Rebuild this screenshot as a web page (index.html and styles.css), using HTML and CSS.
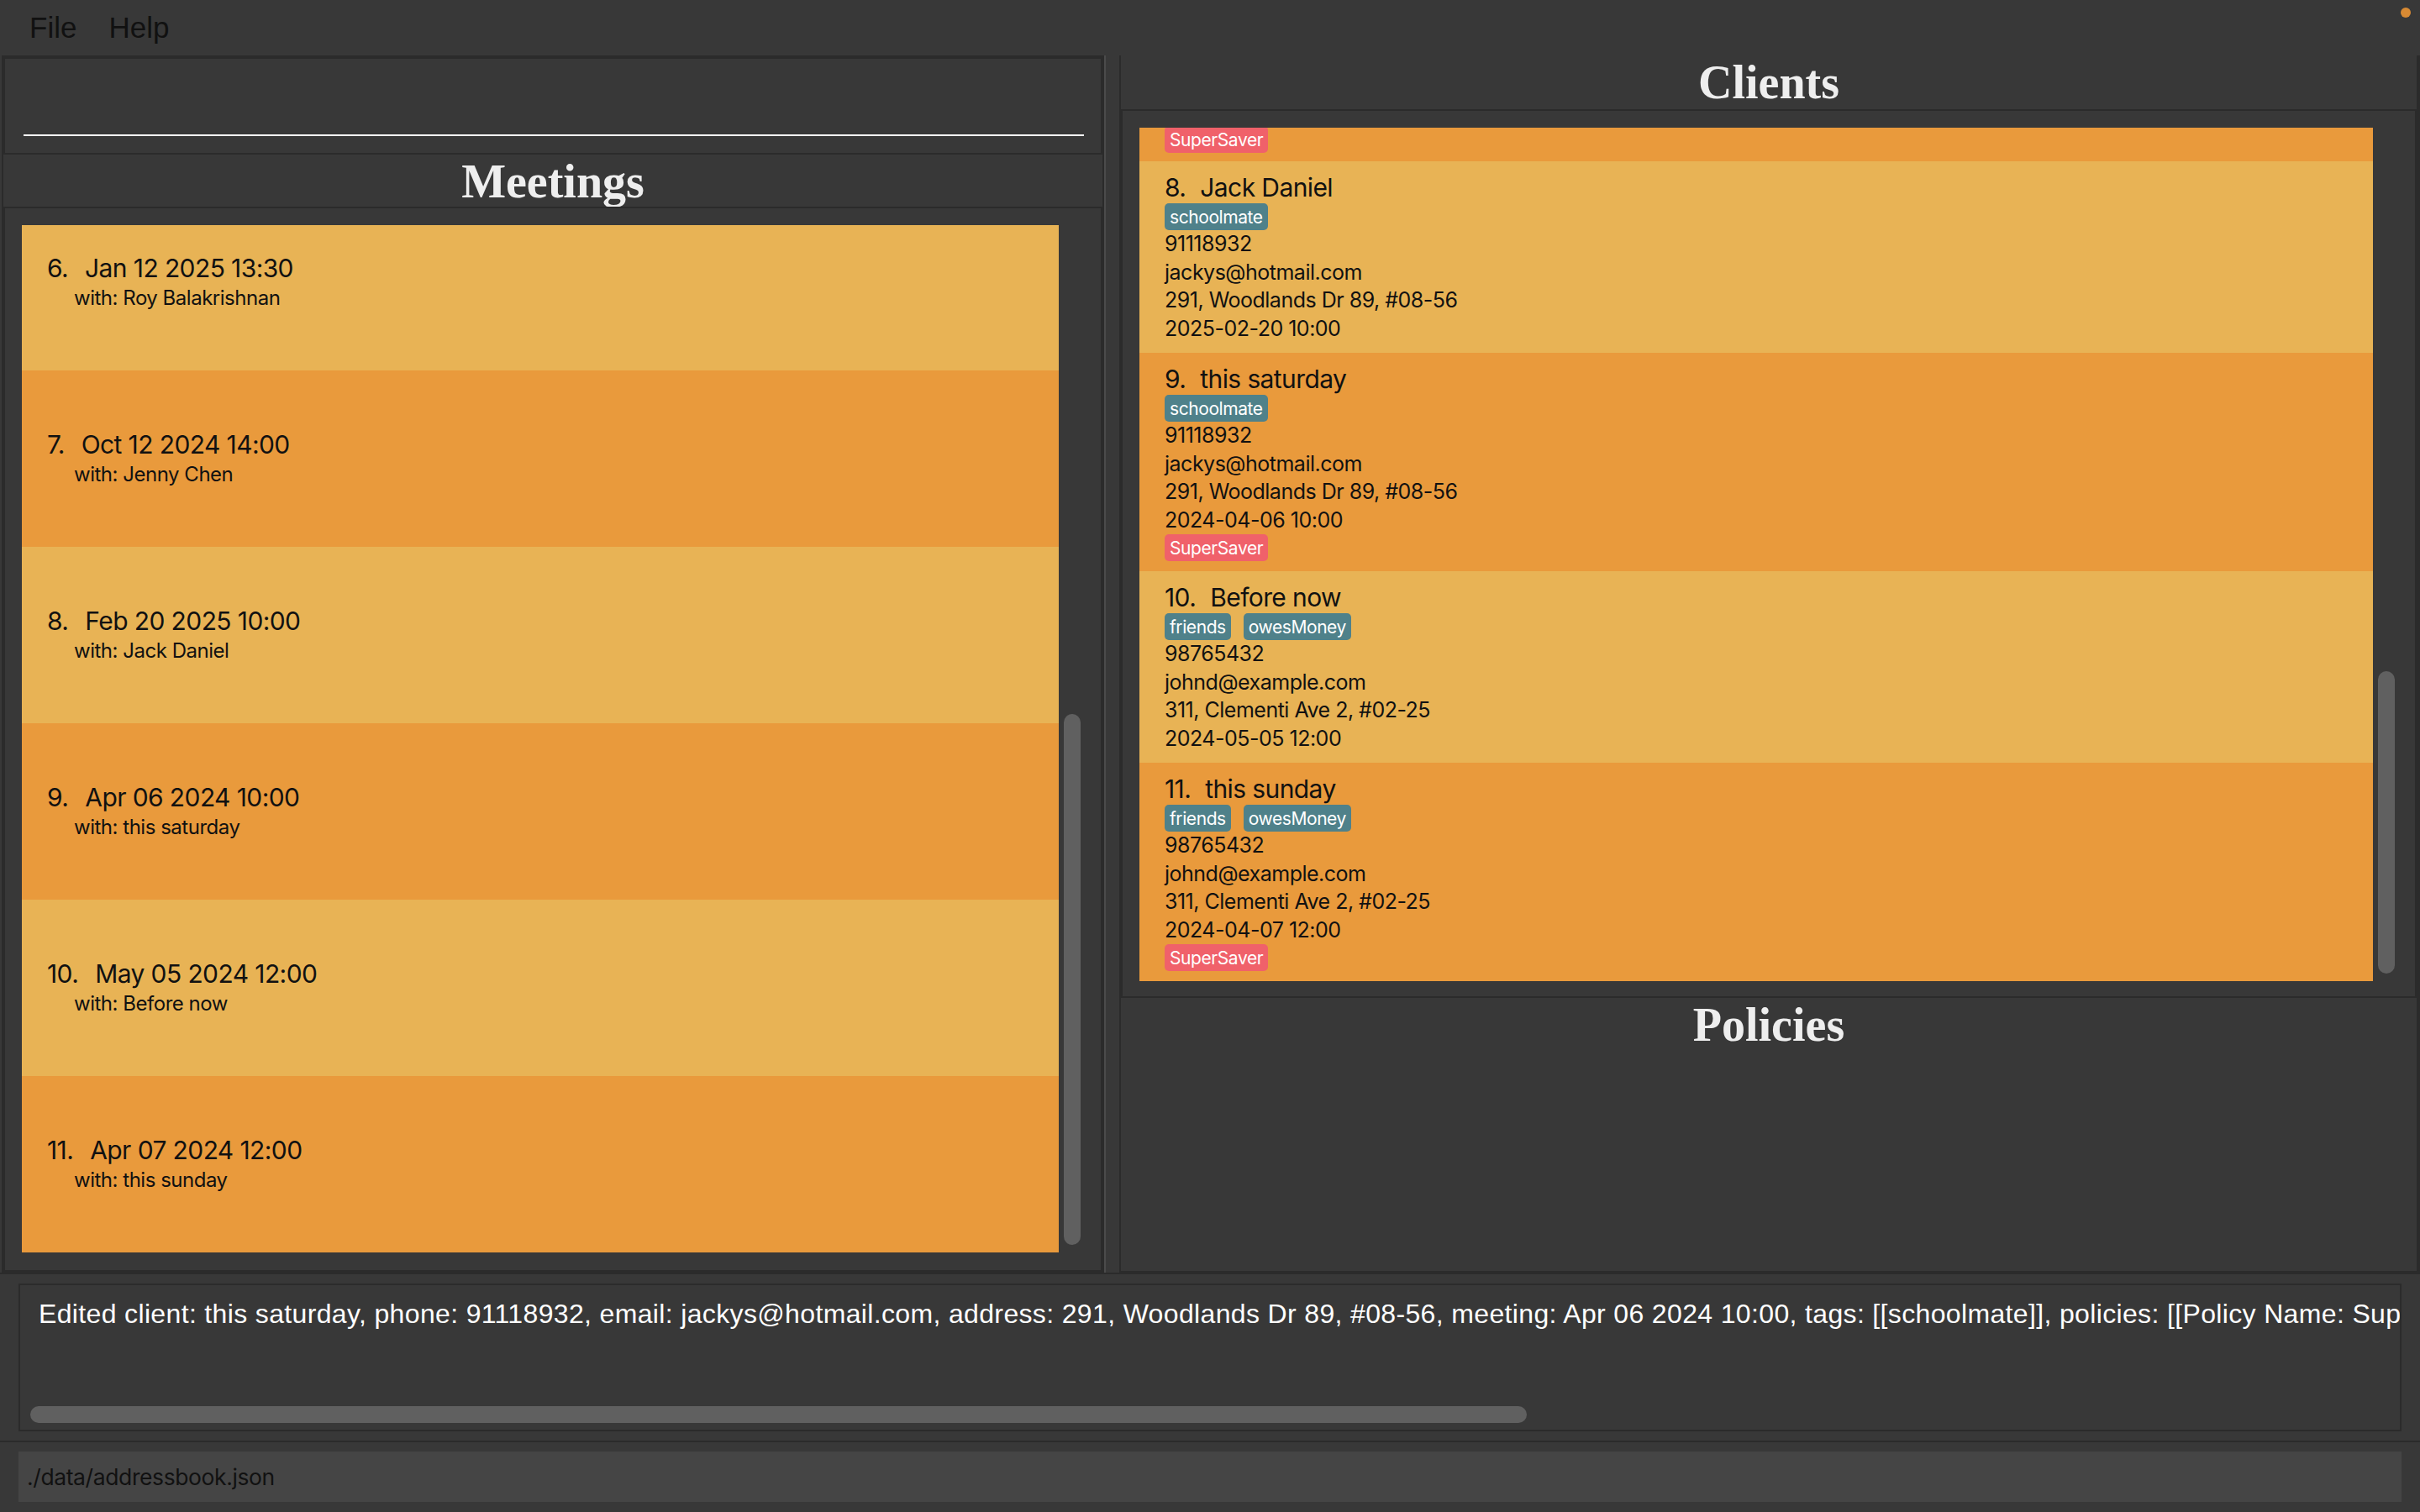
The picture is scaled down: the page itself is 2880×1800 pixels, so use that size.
FILE: index.html
```html
<!DOCTYPE html>
<html lang="en">
<head>
<meta charset="utf-8">
<title>Address Book</title>
<link rel="stylesheet" href="styles.css">
</head>
<body>
<div class="app">
  <div class="menubar">
    <span class="menu-item">File</span>
    <span class="menu-item">Help</span>
    <span class="dot"></span>
  </div>

  <div class="main">
    <div class="left">
      <div class="command-box"><div class="command-line"></div></div>
      <div class="panel-header meetings-header">Meetings</div>
      <div class="list-panel meetings-panel">
        <div class="viewport">
          <div class="list meetings-list">
            <div class="meeting-card light">
              <div class="m-title"><span class="idx">6.</span>Jan 12 2025 13:30</div>
              <div class="m-with">with: Roy Balakrishnan</div>
            </div>
            <div class="meeting-card dark">
              <div class="m-title"><span class="idx">7.</span>Oct 12 2024 14:00</div>
              <div class="m-with">with: Jenny Chen</div>
            </div>
            <div class="meeting-card light">
              <div class="m-title"><span class="idx">8.</span>Feb 20 2025 10:00</div>
              <div class="m-with">with: Jack Daniel</div>
            </div>
            <div class="meeting-card dark">
              <div class="m-title"><span class="idx">9.</span>Apr 06 2024 10:00</div>
              <div class="m-with">with: this saturday</div>
            </div>
            <div class="meeting-card light">
              <div class="m-title"><span class="idx">10.</span>May 05 2024 12:00</div>
              <div class="m-with">with: Before now</div>
            </div>
            <div class="meeting-card dark">
              <div class="m-title"><span class="idx">11.</span>Apr 07 2024 12:00</div>
              <div class="m-with">with: this sunday</div>
            </div>
          </div>
        </div>
        <div class="vscroll"><div class="thumb meetings-thumb"></div></div>
      </div>
    </div>

    <div class="divider"></div>

    <div class="right">
      <div class="panel-header clients-header">Clients</div>
      <div class="list-panel clients-panel">
        <div class="viewport">
          <div class="list clients-list">
            <div class="client-card dark partial">
              <div class="tags"><span class="tag policy">SuperSaver</span></div>
            </div>
            <div class="client-card light">
              <div class="c-title"><span class="idx">8.</span>Jack Daniel</div>
              <div class="tags"><span class="tag">schoolmate</span></div>
              <div class="c-line">91118932</div>
              <div class="c-line">jackys@hotmail.com</div>
              <div class="c-line">291, Woodlands Dr 89, #08-56</div>
              <div class="c-line">2025-02-20 10:00</div>
            </div>
            <div class="client-card dark">
              <div class="c-title"><span class="idx">9.</span>this saturday</div>
              <div class="tags"><span class="tag">schoolmate</span></div>
              <div class="c-line">91118932</div>
              <div class="c-line">jackys@hotmail.com</div>
              <div class="c-line">291, Woodlands Dr 89, #08-56</div>
              <div class="c-line">2024-04-06 10:00</div>
              <div class="tags"><span class="tag policy">SuperSaver</span></div>
            </div>
            <div class="client-card light">
              <div class="c-title"><span class="idx">10.</span>Before now</div>
              <div class="tags"><span class="tag">friends</span><span class="tag">owesMoney</span></div>
              <div class="c-line">98765432</div>
              <div class="c-line">johnd@example.com</div>
              <div class="c-line">311, Clementi Ave 2, #02-25</div>
              <div class="c-line">2024-05-05 12:00</div>
            </div>
            <div class="client-card dark">
              <div class="c-title"><span class="idx">11.</span>this sunday</div>
              <div class="tags"><span class="tag">friends</span><span class="tag">owesMoney</span></div>
              <div class="c-line">98765432</div>
              <div class="c-line">johnd@example.com</div>
              <div class="c-line">311, Clementi Ave 2, #02-25</div>
              <div class="c-line">2024-04-07 12:00</div>
              <div class="tags"><span class="tag policy">SuperSaver</span></div>
            </div>
          </div>
        </div>
        <div class="vscroll"><div class="thumb clients-thumb"></div></div>
      </div>
      <div class="policies-panel">
        <div class="panel-header policies-header">Policies</div>
      </div>
    </div>
  </div>

  <div class="result">
    <div class="result-box">
      <div class="result-text">Edited client: this saturday, phone: 91118932, email: jackys@hotmail.com, address: 291, Woodlands Dr 89, #08-56, meeting: Apr 06 2024 10:00, tags: [[schoolmate]], policies: [[Policy Name: SuperSaver]]</div>
      <div class="hscroll-thumb"></div>
    </div>
  </div>

  <div class="status">
    <div class="status-box">./data/addressbook.json</div>
  </div>
</div>
</body>
</html>
```

FILE: styles.css
```css
* { box-sizing: border-box; }

html, body {
  margin: 0;
  padding: 0;
}

body {
  width: 2880px;
  height: 1800px;
  background: #383838;
  overflow: hidden;
  font-family: Inter, "Liberation Sans", sans-serif;
}

.app {
  position: relative;
  display: flex;
  flex-direction: column;
  height: 1800px;
}

/* ---------- menu bar ---------- */
.menubar {
  height: 66px;
  flex: none;
  display: flex;
  align-items: center;
  padding-left: 16px;
  font-family: "Liberation Sans", Arial, sans-serif;
  font-size: 35px;
  color: #111;
}

.menu-item {
  padding: 0 19px;
  line-height: 66px;
}

.dot {
  position: absolute;
  top: 9px;
  right: 11px;
  width: 12px;
  height: 12px;
  border-radius: 50%;
  background: #d88a33;
}

/* ---------- main split ---------- */
.main {
  height: 1449px;
  flex: none;
  display: flex;
}

.left {
  margin-left: 2px;
  width: 1312px;
  background: #2b2b2b;
  padding: 4px;
  display: flex;
  flex-direction: column;
  gap: 2px;
}

.divider {
  width: 18px;
  border-left: 2px solid #4b4b4b;
  background: #383838;
}

.right {
  width: 1548px;
  background: #2b2b2b;
  padding: 0 4px 2px 2px;
  display: flex;
  flex-direction: column;
  gap: 2px;
}

.command-box {
  height: 112px;
  flex: none;
  background: #383838;
  padding: 90px 20px 0 22px;
}

.command-line {
  height: 2px;
  background: #ffffff;
}

.panel-header {
  background: #383838;
  text-align: center;
  font-family: "Liberation Serif", "Times New Roman", serif;
  font-weight: bold;
  font-size: 56px;
  line-height: 64px;
  color: #eeeeee;
  overflow: hidden;
  flex: none;
}

.meetings-header {
  height: 62px;
  margin: 0 -2px;
}

.clients-header {
  height: 64px;
}

/* ---------- list panels ---------- */
.list-panel {
  background: #383838;
  display: flex;
  gap: 6px;
}

.meetings-panel {
  flex: 1;
  padding: 20px 24px 21px 20px;
}

.clients-panel {
  height: 1054px;
  flex: none;
  margin: 0 2px;
  padding: 20px 24px 18px 20px;
}

.viewport {
  flex: 1;
  overflow: hidden;
}

.meetings-list {
  margin-top: -37px;
}

.vscroll {
  width: 20px;
  display: flex;
  flex-direction: column;
}

.thumb {
  width: 20px;
  border-radius: 10px;
  background: #606060;
}

.meetings-thumb {
  margin-top: 582px;
  height: 632px;
}

.clients-thumb {
  margin-top: 647px;
  height: 360px;
}

.light { background: #e8b355; }
.dark { background: #e99a3c; }

/* meetings */
.meeting-card {
  height: 210px;
  padding: 70px 0 0 30px;
  color: #111;
}

.m-title {
  font-size: 30px;
  line-height: 36px;
  letter-spacing: -0.02em;
}

.m-title .idx {
  margin-right: 20px;
}

.m-with {
  font-size: 24px;
  line-height: 36px;
  padding-left: 32px;
  letter-spacing: -0.02em;
}

/* clients */
.client-card {
  padding: 12px 30px;
  color: #111;
}

.client-card.partial {
  padding-top: 0;
  padding-bottom: 10px;
}

.client-card.partial .tags {
  margin-top: -2px;
}

.c-title {
  font-size: 30px;
  line-height: 38px;
  letter-spacing: -0.02em;
}

.c-title .idx {
  margin-right: 17px;
}

.c-line {
  font-size: 25px;
  line-height: 33.5px;
  letter-spacing: -0.02em;
}

.tags {
  display: flex;
  gap: 15px;
  height: 32px;
}

.tag {
  display: inline-flex;
  align-items: center;
  height: 32px;
  padding: 0 6px;
  border-radius: 5px;
  background: #4f818a;
  color: #ffffff;
  font-size: 21px;
  letter-spacing: -0.02em;
}

.tag.policy {
  background: #f0616a;
}

.policies-panel {
  flex: 1;
  background: #383838;
}

/* ---------- result ---------- */
.result {
  height: 200px;
  flex: none;
  border-top: 2px solid #2b2b2b;
  padding: 11px 22px;
}

.result-box {
  height: 176px;
  border: 2px solid #2b2b2b;
  background: #383838;
  overflow: hidden;
  display: flex;
  flex-direction: column;
  padding: 16px 0 0 0;
}

.result-text {
  padding-left: 22px;
  font-family: "Liberation Sans", Arial, sans-serif;
  font-size: 32px;
  letter-spacing: 0.35px;
  color: #ffffff;
  white-space: nowrap;
}

.hscroll-thumb {
  margin-top: auto;
  margin-bottom: 8px;
  margin-left: 12px;
  width: 1781px;
  height: 20px;
  border-radius: 10px;
  background: #606060;
  flex: none;
}

/* ---------- status ---------- */
.status {
  height: 85px;
  flex: none;
  border-top: 2px solid #2b2b2b;
  padding: 11px 22px 0 22px;
}

.status-box {
  height: 60px;
  background: #454545;
  padding-left: 10px;
  font-size: 26.5px;
  line-height: 60px;
  color: #111;
  letter-spacing: -0.015em;
}
```
